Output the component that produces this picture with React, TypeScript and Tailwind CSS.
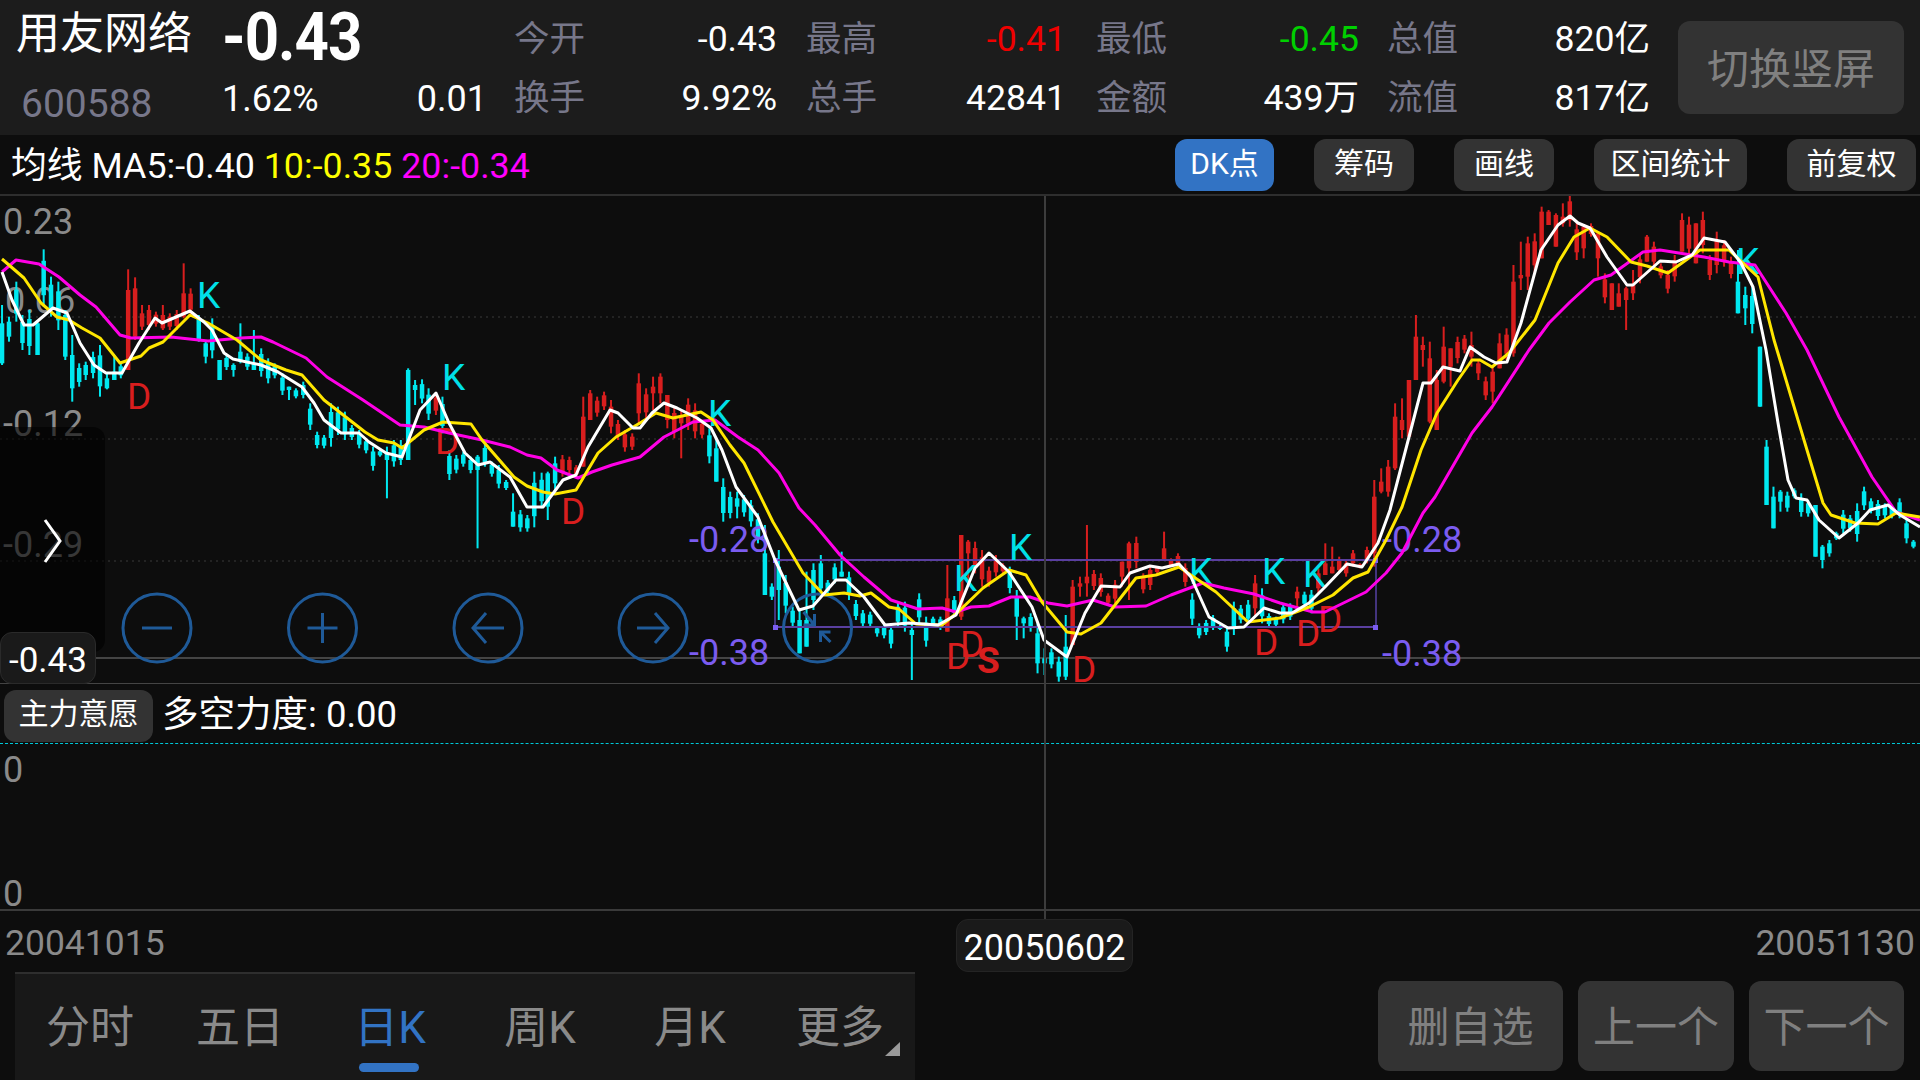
import React from 'react';

type Row = number[];
type Candle = { x: number; wt: number; wb: number; bt: number; bb: number; color: string };

const CYAN = '#00e8f0';
const RED = '#d81e1e';

// traced rows: [x, wickTop, wickBottom, bodyTop?, bodyBottom?]
const seg = (color: string, ox: number, oy: number, rows: Row[]): Candle[] =>
  rows.map(([zx, wt, wb, bt, bb]) => {
    const h = wb - wt;
    const top = bt ?? wt + h * 0.2;
    const bottom = bb ?? wb - h * 0.2;
    return { x: ox + zx / 2.45, wt: oy + wt / 3, wb: oy + wb / 3, bt: oy + top / 3, bb: oy + bottom / 3, color };
  });

const candles: Candle[] = [
  ...seg(CYAN, 0, 190, [
    [5, 345, 525, 400, 520], [22, 380, 455], [40, 275, 395], [55, 375, 480], [72, 360, 495], [92, 390, 495, 400, 495],
    [107, 178, 350], [125, 260, 380], [143, 275, 420], [160, 360, 510, 375, 500], [177, 435, 635, 495, 595], [194, 520, 590],
    [210, 515, 570, 525, 555], [228, 485, 565], [245, 465, 620], [262, 550, 598, 565, 595], [280, 495, 570, 545, 570], [296, 520, 565],
  ]),
  ...seg(RED, 0, 190, [
    [314, 238, 540, 300, 540], [331, 262, 450, 295, 440], [348, 345, 420, 370, 410], [365, 345, 420], [382, 365, 410], [399, 345, 420, 375, 415],
    [416, 370, 420], [433, 360, 420], [450, 220, 385, 310, 380], [467, 295, 375],
  ]),
  ...seg(CYAN, 0, 190, [
    [487, 375, 455, 385, 450], [504, 450, 520, 460, 500], [520, 385, 505], [538, 510, 570, 510, 570], [555, 495, 540], [572, 520, 560, 525, 540],
    [589, 400, 520, 485, 515], [606, 490, 540], [622, 420, 540, 520, 540], [640, 475, 560], [657, 505, 580], [673, 520, 565], [692, 550, 615],
    [708, 590, 630, 590, 600], [725, 595, 625], [743, 575, 625], [760, 640, 720], [777, 725, 775], [794, 735, 775], [811, 640, 770], [828, 650, 735],
    [845, 665, 750], [862, 705, 750], [880, 720, 775], [897, 745, 790], [914, 770, 842], [931, 780, 800], [948, 770, 925, 790, 810], [965, 750, 830],
    [982, 750, 825], [1000, 535, 810, 540, 810], [1017, 570, 645, 585, 600], [1034, 568, 640], [1050, 595, 690], [1084, 620, 730],
    [1101, 780, 870], [1118, 795, 850], [1135, 785, 830], [1153, 800, 850], [1170, 795, 1075, 800, 840], [1188, 760, 830], [1205, 815, 860],
    [1222, 825, 895], [1240, 870, 900], [1257, 910, 1010, 965, 1010], [1275, 960, 1025], [1292, 975, 1025], [1309, 845, 1012], [1327, 848, 955],
    [1342, 845, 990, 850, 950], [1360, 800, 900],
  ]),
  ...seg(RED, 0, 190, [
    [1068, 610, 675], [1378, 795, 860], [1395, 800, 850], [1412, 825, 860], [1429, 620, 830, 680, 830], [1446, 600, 690, 610, 690], [1463, 620, 680],
    [1480, 605, 660], [1497, 630, 730], [1514, 690, 750], [1531, 720, 785], [1549, 730, 780], [1565, 550, 700],
  ]),
  ...seg(RED, 640, 360, [
    [15, 85, 175], [32, 50, 150, 80, 100], [50, 40, 130, 50, 100], [67, 105, 205, 105, 180], [84, 140, 235], [101, 150, 295, 170, 190], [118, 115, 210], [135, 130, 235], [152, 180, 235],
    [753, 615, 815, 715, 815], [787, 525, 780, 525, 770], [804, 540, 680, 545, 580], [821, 545, 640], [838, 570, 680], [855, 620, 680], [872, 585, 650], [889, 610, 640],
    [1060, 660, 855, 680, 855], [1078, 650, 710, 670, 680], [1095, 495, 710, 650, 670], [1112, 630, 690], [1129, 640, 710], [1147, 700, 735], [1164, 660, 730],
    [1181, 605, 680, 605, 650], [1198, 545, 720, 550, 625], [1216, 530, 625], [1233, 640, 700], [1250, 615, 690], [1267, 620, 640], [1284, 515, 600, 565, 600],
    [1301, 595, 620], [1318, 580, 620], [1336, 610, 680], [1507, 645, 770],
  ]),
  ...seg(CYAN, 640, 360, [
    [170, 205, 310], [187, 235, 365, 265, 365], [204, 355, 485], [221, 395, 475], [238, 395, 475, 415, 440], [255, 405, 470], [272, 420, 500], [289, 460, 550], [306, 495, 705, 580, 705],
    [323, 670, 720], [340, 570, 780, 620, 690], [357, 645, 760], [374, 740, 800], [391, 750, 880, 780, 880], [408, 635, 860, 780, 860], [425, 610, 750, 630, 720], [443, 585, 710],
    [460, 660, 700], [477, 610, 670], [494, 575, 650, 635, 650], [512, 635, 720], [529, 720, 780], [546, 750, 800], [564, 755, 800], [581, 800, 830, 805, 820], [598, 790, 835],
    [615, 795, 865], [632, 725, 800], [649, 725, 815], [666, 790, 960, 810, 825], [684, 700, 790], [701, 770, 860], [718, 770, 800], [736, 770, 810], [770, 708, 770],
    [906, 620, 700], [923, 690, 840, 710, 770], [940, 770, 835, 775, 790], [957, 760, 815], [974, 790, 940], [991, 865, 945, 895, 910], [1008, 865, 925], [1026, 890, 965], [1043, 765, 960, 860, 950],
    [1353, 700, 795], [1370, 790, 835], [1387, 780, 825], [1404, 765, 810], [1421, 795, 810], [1438, 800, 875], [1455, 725, 825], [1472, 735, 790], [1490, 720, 790], [1524, 685, 790], [1541, 760, 800], [1558, 770, 800],
  ]),
  ...seg(CYAN, 1280, 190, [
    [8, 1240, 1300], [25, 1240, 1290], [60, 1205, 1250], [77, 1200, 1270],
    [1122, 180, 370, 275, 370], [1140, 290, 405, 315, 355], [1157, 290, 430], [1176, 470, 650, 470, 650], [1192, 750, 945, 770, 945], [1209, 890, 1015, 920, 1015], [1226, 900, 965, 905, 935],
    [1243, 905, 965], [1260, 895, 925], [1277, 910, 980], [1294, 930, 980], [1312, 945, 1100, 945, 1100], [1329, 1065, 1135, 1070, 1110], [1346, 1050, 1100], [1363, 1025, 1050], [1380, 960, 1030],
    [1397, 975, 1025], [1414, 940, 1055], [1431, 890, 960], [1448, 925, 970], [1465, 930, 990], [1482, 940, 985], [1499, 945, 985], [1518, 925, 985], [1535, 985, 1060], [1552, 1050, 1075],
  ]),
  ...seg(RED, 1280, 190, [
    [42, 1190, 1260, 1205, 1225], [94, 1135, 1210], [111, 1060, 1155, 1120, 1155], [128, 1070, 1150, 1130, 1150], [145, 1100, 1150], [162, 1110, 1160], [179, 1080, 1130], [196, 1120, 1135], [213, 1070, 1120],
    [231, 870, 1130, 920, 1090], [248, 835, 910, 875, 905], [265, 810, 920, 830, 905], [282, 640, 840, 680, 835], [299, 625, 745, 690, 720], [316, 570, 740, 570, 740], [333, 375, 570, 440, 570],
    [350, 440, 530, 465, 480], [367, 455, 700, 505, 695], [384, 540, 720, 570, 720], [401, 410, 580, 470, 575], [418, 475, 590, 475, 530], [435, 440, 520], [452, 435, 490], [469, 425, 530, 465, 500],
    [486, 510, 570, 520, 550], [504, 560, 630], [521, 530, 640, 545, 605], [538, 430, 535, 460, 535], [555, 415, 510], [572, 225, 500, 275, 490], [590, 155, 300, 255, 265], [607, 140, 300, 160, 260],
    [624, 130, 250], [641, 50, 205, 65, 205], [658, 60, 105, 65, 105], [676, 70, 170, 75, 170], [693, 40, 110, 80, 100], [710, 15, 110], [727, 95, 210], [744, 110, 205, 110, 175], [762, 100, 140],
    [779, 130, 260, 130, 205], [796, 250, 340], [813, 280, 360, 280, 360], [830, 280, 350, 310, 350], [848, 290, 420, 295, 330], [865, 240, 330, 285, 310], [882, 190, 280], [899, 135, 215, 140, 215],
    [916, 155, 230], [933, 220, 265], [950, 240, 310], [967, 195, 275], [985, 70, 185, 90, 185], [1002, 80, 200], [1019, 100, 220, 100, 220], [1036, 65, 190], [1053, 195, 270], [1070, 125, 250],
    [1088, 150, 230], [1105, 200, 265],
  ]),
];

const ma5 = '2,272 12,300 24,325 33,325 53,308 67,313 80,343 94,365 106,373 122,373 139,343 155,318 162,323 190,311 204,322 212,330 224,353 233,359 261,365 278,372 302,387 314,403 324,420 341,433 359,433 369,442 386,453 402,457 420,410 436,393 449,423 465,453 478,465 490,462 510,477 527,507 543,507 563,480 576,475 588,447 610,410 618,413 633,428 640,428 652,413 664,403 677,408 697,418 711,428 722,450 736,487 758,517 775,560 799,610 813,606 836,580 846,580 864,597 885,625 909,623 938,625 956,615 975,568 989,553 1009,572 1032,607 1044,640 1067,657 1085,613 1101,586 1120,587 1130,573 1150,566 1162,568 1179,564 1191,577 1209,617 1228,628 1244,627 1264,608 1280,613 1292,613 1309,603 1325,587 1347,564 1362,567 1378,543 1390,510 1409,437 1423,383 1431,383 1443,367 1460,371 1470,347 1484,357 1496,363 1507,362 1521,323 1541,250 1558,225 1570,216 1578,223 1590,228 1607,257 1627,285 1633,285 1660,261 1676,262 1692,255 1704,238 1725,242 1741,263 1753,287 1766,350 1778,423 1788,480 1796,498 1807,500 1819,520 1839,538 1858,523 1870,510 1888,505 1900,515 1920,527';
const ma10 = '2,259 24,278 41,303 57,317 69,320 82,328 100,338 120,363 141,356 149,348 163,342 190,315 208,323 237,340 261,360 286,370 302,375 324,400 365,432 378,440 394,443 402,448 424,430 443,422 471,424 482,440 514,477 527,486 543,492 555,494 576,490 598,453 616,437 640,423 656,413 673,418 701,412 713,420 730,445 744,463 773,522 803,573 824,595 844,593 860,596 871,593 889,607 899,609 916,624 942,625 958,612 983,588 1009,570 1026,575 1042,602 1067,632 1081,634 1101,623 1136,578 1156,575 1179,567 1216,592 1248,622 1280,618 1309,607 1333,595 1353,578 1368,572 1386,540 1402,507 1421,450 1437,413 1458,380 1472,360 1480,360 1492,367 1509,353 1535,320 1558,263 1574,237 1590,228 1607,237 1631,262 1647,266 1668,273 1700,250 1729,250 1758,277 1774,340 1807,450 1823,503 1831,515 1855,523 1878,524 1896,513 1920,517';
const ma20 = '2,272 16,260 39,264 59,277 80,295 96,307 120,335 131,338 171,337 208,341 241,338 261,337 273,342 306,358 327,377 363,400 400,425 424,427 449,433 482,440 510,447 527,455 541,458 557,470 578,478 592,472 612,465 640,457 664,437 693,422 715,420 738,437 758,450 779,473 799,508 815,525 840,555 864,577 891,600 918,609 942,608 956,612 971,607 989,606 1011,597 1030,597 1048,603 1067,606 1093,600 1115,607 1146,606 1171,595 1203,583 1224,588 1254,594 1280,603 1313,612 1325,612 1366,592 1386,573 1402,553 1423,513 1435,497 1472,433 1492,407 1529,350 1549,323 1570,302 1594,280 1611,275 1643,252 1660,250 1704,257 1729,262 1755,265 1786,313 1807,350 1839,417 1872,477 1896,512 1920,520';

const marks: [string, number, number][] = [
  ['K', 197, 308], ['K', 442, 390], ['K', 708, 426], ['K', 954, 591], ['K', 1009, 560], ['K', 1189, 584], ['K', 1262, 584], ['K', 1303, 587], ['K', 1736, 274],
  ['D', 127, 409], ['D', 435, 454], ['D', 561, 524], ['D', 946, 669], ['D', 960, 657], ['D', 1072, 682], ['D', 1254, 655], ['D', 1296, 646], ['D', 1318, 632],
];

const stats = [
  { w: 'w-[263px]', gap: 'ml-[27px]', top: ['今开', '-0.43', 'text-white'], bottom: ['换手', '9.92%', 'text-white'] },
  { w: 'w-[260px]', gap: 'ml-[29px]', top: ['最高', '-0.41', 'text-[#f00000]'], bottom: ['总手', '42841', 'text-white'] },
  { w: 'w-[263px]', gap: 'ml-[30px]', top: ['最低', '-0.45', 'text-[#00d000]'], bottom: ['金额', '439万', 'text-white'] },
  { w: 'w-[263px]', gap: 'ml-[28px]', top: ['总值', '820亿', 'text-white'], bottom: ['流值', '817亿', 'text-white'] },
];

const tabs = ['分时', '五日', '日K', '周K', '月K', '更多'];

function CircleButton({ cx, children }: { cx: number; children: React.ReactNode }) {
  return (
    <g transform={`translate(${cx} 628)`} fill="none" stroke="#1f5a98" strokeWidth={3}>
      <circle r={34} />
      {children}
    </g>
  );
}

function KChart() {
  return (
    <svg viewBox="0 196 1920 487" className="block w-[1920px] h-[487px]">
      {[317, 439, 561].map((y) => (
        <line key={y} x1={0} x2={1920} y1={y} y2={y} stroke="#3a3a3a" strokeDasharray="2 4" />
      ))}
      <line x1={0} x2={1920} y1={658} y2={658} stroke="#444444" strokeWidth={2} />
      <g fontSize={36} fill="#8a8a8a">
        <text x={3} y={234}>0.23</text>
        <text x={5} y={313}>0.06</text>
        <text x={3} y={436}>-0.12</text>
        <text x={3} y={557}>-0.29</text>
      </g>
      {candles.map((c, i) => (
        <g key={i} fill={c.color}>
          <rect x={c.x - 1} y={c.wt} width={2} height={c.wb - c.wt} />
          <rect x={c.x - 2.25} y={c.bt} width={4.5} height={c.bb - c.bt} />
        </g>
      ))}
      <g stroke="#5a3fa0">
        <line x1={775} x2={1376} y1={560} y2={560} strokeWidth={2} />
        <line x1={775} x2={1376} y1={627} y2={627} strokeWidth={2} />
        <line x1={775} x2={775} y1={560} y2={627} stroke="#7b5cf0" />
        <line x1={1376} x2={1376} y1={560} y2={627} stroke="#7b5cf0" />
      </g>
      <g fill="#7b5cf0">
        <rect x={773} y={558} width={5} height={5} />
        <rect x={773} y={625} width={5} height={5} />
        <rect x={1373} y={558} width={5} height={5} />
        <rect x={1373} y={625} width={5} height={5} />
      </g>
      <g fontSize={36} fill="#7b5cf0">
        <text x={689} y={552}>-0.28</text>
        <text x={689} y={665}>-0.38</text>
        <text x={1382} y={552}>-0.28</text>
        <text x={1382} y={666}>-0.38</text>
      </g>
      <g fontSize={37}>
        {marks.map(([t, x, y], i) => (
          <text key={i} x={x} y={y} fill={t === 'K' ? '#00e0e8' : RED}>{t}</text>
        ))}
        <text x={977} y={673} fill={RED} fontWeight={700}>S</text>
      </g>
      <CircleButton cx={157}>
        <path d="M-15 0H15" />
      </CircleButton>
      <CircleButton cx={322.5}>
        <path d="M-15 0H15M0 -15V15" />
      </CircleButton>
      <CircleButton cx={488}>
        <path d="M16 0H-14M-2 -15L-15 0L-2 15" />
      </CircleButton>
      <CircleButton cx={653}>
        <path d="M-16 0H14M2 -15L15 0L2 15" />
      </CircleButton>
      <CircleButton cx={817.5}>
        <path d="M-14 -16L-3 -3M-3 -14V-3H-14M13 14L3 4M3 14V4H13" />
      </CircleButton>
      <polyline points={ma20} fill="none" stroke="#ff00e6" strokeWidth={3} strokeLinejoin="round" />
      <polyline points={ma10} fill="none" stroke="#ffe600" strokeWidth={3} strokeLinejoin="round" />
      <polyline points={ma5} fill="none" stroke="#ffffff" strokeWidth={3} strokeLinejoin="round" />
    </svg>
  );
}

export default function App() {
  return (
    <div className="relative w-[1920px] h-[1080px] overflow-hidden bg-[#0d0d0d] text-white font-[Roboto,'Noto_Sans_CJK_SC',sans-serif]">
      {/* quote header */}
      <div className="flex h-[135px] bg-[#1c1c1c]">
        <div className="w-[222px] pl-[16px] pt-[9px] shrink-0">
          <div className="h-[59px] leading-[50px] text-[44px] whitespace-nowrap">用友网络</div>
          <div className="h-[59px] pl-[5px] leading-[72px] text-[39px] text-[#77778a]">600588</div>
        </div>
        <div className="w-[265px] pt-[10px] shrink-0">
          <div className="h-[59px] origin-top scale-y-[1.1] leading-[50px] text-[60px] font-bold tracking-[-1px]">-0.43</div>
          <div className="flex h-[59px] items-center justify-between text-[36px]">
            <span>1.62%</span>
            <span>0.01</span>
          </div>
        </div>
        {stats.map((s) => (
          <div key={s.top[0]} className={`${s.w} ${s.gap} shrink-0 pt-[10px] text-[35.6px]`}>
            {[s.top, s.bottom].map(([label, value, color]) => (
              <div key={label} className="flex h-[59px] items-center justify-between">
                <span className="text-[#77778a]">{label}</span>
                <span className={color}>{value}</span>
              </div>
            ))}
          </div>
        ))}
        <button className="ml-[28px] mt-[21px] h-[93px] w-[226px] rounded-xl bg-[#333333] pt-[4px] text-[42px] text-[#808080]">切换竖屏</button>
      </div>

      {/* moving averages and tools */}
      <div className="flex h-[61px] items-center border-b-2 border-[#2e2e2e] pl-[11px] pr-[4px]">
        <div className="pt-[4px] text-[35.8px] whitespace-nowrap">
          均线 MA5:-0.40 <span className="text-[#ffff00]">10:-0.35</span> <span className="text-[#ff00ff]">20:-0.34</span>
        </div>
        <div className="ml-auto flex gap-[40px] text-[30px]">
          <button className="h-[52px] w-[99px] rounded-xl bg-[#3273c4] pb-[2px]">DK点</button>
          <button className="h-[52px] w-[100px] rounded-xl bg-[#333333] pb-[2px]">筹码</button>
          <button className="h-[52px] w-[100px] rounded-xl bg-[#333333] pb-[2px]">画线</button>
          <button className="h-[52px] w-[153px] rounded-xl bg-[#333333] pb-[2px]">区间统计</button>
          <button className="h-[52px] w-[129px] rounded-xl bg-[#333333] pb-[2px]">前复权</button>
        </div>
      </div>

      {/* candles */}
      <div className="relative h-[487px]">
        <KChart />
        <div className="absolute left-0 top-[231px] h-[225px] w-[105px] rounded-r-xl bg-black/60" />
        <svg viewBox="0 0 20 44" className="absolute left-[43px] top-[323px] h-[44px] w-[20px]">
          <path d="M2 1L17 22L2 43" fill="none" stroke="#ffffff" strokeWidth={3} />
        </svg>
        <div className="absolute left-0 top-[436px] flex h-[52px] w-[96px] items-center justify-center rounded-xl border border-[#2a2a2a] bg-[#1a1a1a] pt-[6px] text-[35px]">-0.43</div>
      </div>

      {/* sub chart */}
      <div className="h-[228px] border-t border-b-2 border-t-[#444444] border-b-[#3a3a3a] text-[#8a8a8a]">
        <div className="flex h-[60px] items-center gap-[9px] border-b border-dashed border-[#00c8d8] pl-[4px] pt-[4px] text-white">
          <button className="h-[52px] w-[149px] rounded-xl bg-[#333333] pb-[4px] text-[30px]">主力意愿</button>
          <span className="text-[36.5px]">多空力度: 0.00</span>
        </div>
        <div className="flex h-[165px] flex-col justify-between pl-[3px] text-[36px]">
          <span className="leading-[52px]">0</span>
          <span className="leading-[30px]">0</span>
        </div>
      </div>

      {/* footer */}
      <div className="flex h-[61px] items-center justify-between pl-[5px] pr-[5px] pt-[4px] text-[35.5px] text-[#8a8a8a]">
        <span>20041015</span>
        <span>20051130</span>
      </div>
      <div className="flex h-[108px] items-start pl-[15px]">
        <div className="relative flex h-[108px] w-[900px] border-t-2 border-[#2e2e2e] bg-[#181818]">
          {tabs.map((t) => (
            <div key={t} className={`relative flex h-[106px] w-[150px] items-center justify-center pt-[2px] text-[44px] ${t === '日K' ? 'text-[#3273c4]' : 'text-[#8a8a8a]'}`}>
              {t}
              {t === '日K' && <div className="absolute bottom-[8px] left-[44px] h-[9px] w-[60px] rounded-full bg-[#3273c4]" />}
            </div>
          ))}
          <svg viewBox="0 0 15 14" className="absolute right-[15px] top-[68px] h-[14px] w-[15px]">
            <path d="M15 0V14H0Z" fill="#9a9a9a" />
          </svg>
        </div>
        <div className="ml-auto mr-[16px] mt-[9px] flex gap-[15px] text-[42px] text-[#808080]">
          <button className="h-[90px] w-[185px] rounded-xl bg-[#333333] pt-[3px]">删自选</button>
          <button className="h-[90px] w-[156px] rounded-xl bg-[#333333] pt-[3px]">上一个</button>
          <button className="h-[90px] w-[155px] rounded-xl bg-[#333333] pt-[3px]">下一个</button>
        </div>
      </div>

      {/* crosshair and date badge */}
      <div className="absolute left-[1044px] top-[196px] h-[724px] w-[2px] bg-[#3c3c3c]" />
      <div className="absolute left-[956px] top-[919px] flex h-[53px] w-[177px] items-center justify-center rounded-xl border border-[#242424] bg-[#1a1a1a] pt-[4px] text-[36px]">20050602</div>
    </div>
  );
}
